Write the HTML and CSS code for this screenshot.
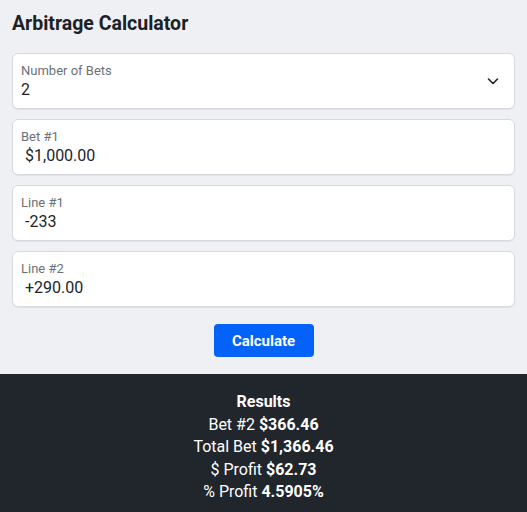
FILE: index.html
```html
<!DOCTYPE html>
<html>
<head>
  <title>Arbitrage Calculator</title>
  <meta charset="UTF-8">
  <link rel="stylesheet" href="styles.css">
</head>
<body>
  <div class="calc">
    <h1>Arbitrage Calculator</h1>
    <div class="fields">
      <div class="field">
        <div class="fieldText">
          <div class="label">Number of Bets</div>
          <div class="value select">2</div>
        </div>
        <svg class="chevron" width="14" height="14" viewBox="0 0 14 14">
          <path d="M2.5 5 L7 9.5 L11.5 5" fill="none" stroke="#222" stroke-width="1.6" stroke-linecap="round" stroke-linejoin="round"/>
        </svg>
      </div>
      <div class="field">
        <div class="fieldText">
          <div class="label">Bet #1</div>
          <div class="value">$1,000.00</div>
        </div>
      </div>
      <div class="field">
        <div class="fieldText">
          <div class="label">Line #1</div>
          <div class="value">-233</div>
        </div>
      </div>
      <div class="field">
        <div class="fieldText">
          <div class="label">Line #2</div>
          <div class="value">+290.00</div>
        </div>
      </div>
    </div>
    <div class="actions">
      <button class="calcBtn">Calculate</button>
    </div>
  </div>
  <div class="results">
    <div class="resTitle">Results</div>
    <div>Bet #2 <b>$366.46</b></div>
    <div>Total Bet <b>$1,366.46</b></div>
    <div>$ Profit <b>$62.73</b></div>
    <div>% Profit <b>4.5905%</b></div>
  </div>
</body>
</html>
```

FILE: styles.css
```css
body {
  margin: 0;
  padding: 0;
  background: #eef0f3;
  color: #212529;
  font-family: Roboto, "Liberation Sans", sans-serif;
}
.calc {
  padding: 12px 12px 17px 12px;
}
h1 {
  font-size: 19.5px;
  font-weight: 700;
  margin: 0 0 17px 0;
  line-height: 24px;
  color: #1d2125;
}
.fields {
  display: flex;
  flex-direction: column;
  gap: 10px;
}
.field {
  height: 56px;
  box-sizing: border-box;
  background: #ffffff;
  border: 1px solid #d6dadf;
  border-radius: 6px;
  box-shadow: 0 1px 1px rgba(0, 0, 0, 0.06);
  display: flex;
  align-items: center;
  padding: 0 14px 0 8px;
}
.fieldText {
  flex: 1;
}
.label {
  font-size: 13px;
  line-height: 16px;
  color: #6c7178;
}
.value {
  font-size: 16px;
  line-height: 20px;
  color: #212529;
  padding-left: 4px;
  margin-top: 1px;
}
.value.select {
  padding-left: 0;
}
.chevron {
  display: block;
}
.actions {
  display: flex;
  justify-content: center;
  margin-top: 17px;
}
.calcBtn {
  width: 100px;
  height: 33px;
  background: #0562f8;
  color: #ffffff;
  border: none;
  border-radius: 4px;
  font-family: Roboto, "Liberation Sans", sans-serif;
  font-size: 15px;
  font-weight: 700;
}
.results {
  background: #21252c;
  color: #ffffff;
  text-align: center;
  font-size: 16px;
  line-height: 22.5px;
  padding: 17px 0 20px 0;
}
.resTitle {
  font-weight: 700;
}
```
